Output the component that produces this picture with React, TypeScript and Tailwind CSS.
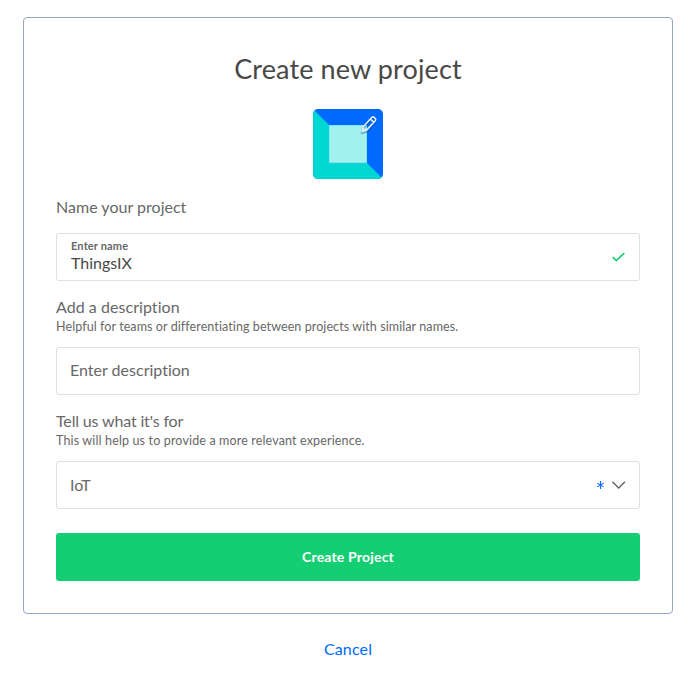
function ProjectIcon() {
  return (
    <svg width="70" height="70" viewBox="0 0 70 70" className="mt-[21px] rounded-[5px]" aria-hidden="true">
      <rect width="70" height="70" fill="#0069ff" />
      <path d="M0 0 L16 16 V54 H54 L70 70 H0 Z" fill="#00d7d2" />
      <rect x="16" y="16" width="38" height="38" fill="#a1f2ee" />
      <path d="M16.5 53.5V16.5H53.5V53.5Z" fill="none" stroke="#86e8ea" />
      <g fill="none" strokeLinejoin="round" strokeLinecap="round" transform="translate(0 0.6)">
        <path d="M49 22.3 L50.3 17.5 L58.9 8.1 Q59.9 7.2 61 8.2 L62.3 9.4 Q63.3 10.4 62.3 11.5 L53.6 20.9 Z" stroke="#003a8c" strokeOpacity="0.35" strokeWidth="2.8" transform="translate(0 1)" />
        <path d="M49 21.9 L50.3 17.1 L58.9 7.7 Q59.9 6.8 61 7.8 L62.3 9 Q63.3 10 62.3 11.1 L53.6 20.5 Z M57.4 9.5 L60.8 12.6" stroke="#dbe9fb" strokeWidth="1.7" />
        <path d="M49 21.9 L50.1 17.9 L52.9 20.7 Z" fill="#dbe9fb" />
      </g>
    </svg>
  );
}

export default function App() {
  return (
    <main className="flex h-[689px] w-[690px] flex-col bg-white pl-[23px] pt-[17px] font-['Lato',sans-serif] text-[#676767]">
      <section className="flex h-[597px] w-[650px] flex-col items-center rounded-[4px] border border-[#99a6c2] px-8 pt-8">
        <h1 className="h-[38px] whitespace-nowrap text-[27px] leading-[38px] tracking-[0.12px] text-[#484848]">
          Create new project
        </h1>
        <ProjectIcon />
        <div className="mt-[18px] flex w-full flex-col">
          <h2 className="h-5 text-base leading-5 tracking-[0.02px]">Name your project</h2>
          <div className="mt-4 flex h-12 items-center justify-between rounded-[3px] border border-[#dfdfdf] px-[14px]">
            <div className="flex flex-col pb-[2px]">
              <span className="text-[11px] font-bold leading-[14px] tracking-[0.15px]">Enter name</span>
              <span className="text-base leading-5 text-[#484848]">ThingsIX</span>
            </div>
            <svg width="13" height="10" viewBox="0 0 13 10" fill="none" stroke="#15cd72" strokeWidth="1.6">
              <path d="M0.7 5.2 L4.3 8.6 L12.3 1" />
            </svg>
          </div>
          <div className="mt-4 flex flex-col">
            <h2 className="h-5 text-base leading-5 tracking-[0.05px]">Add a description</h2>
            <p className="mt-px h-[18px] text-[12.5px] leading-[18px] tracking-[0.09px]">
              Helpful for teams or differentiating between projects with similar names.
            </p>
          </div>
          <div className="mt-[11px] flex h-12 items-center rounded-[3px] border border-[#dfdfdf] px-[13px] pb-[2px] text-base tracking-[0.01px]">
            Enter description
          </div>
          <div className="mt-4 flex flex-col">
            <h2 className="h-5 text-base leading-5 tracking-[-0.15px]">Tell us what it's for</h2>
            <p className="mt-px h-[18px] text-[12.5px] leading-[18px] tracking-[0.15px]">
              This will help us to provide a more relevant experience.
            </p>
          </div>
          <div className="mt-[11px] flex h-12 items-center rounded-[3px] border border-[#dfdfdf] px-[13px] text-base">
            <span>IoT</span>
            <svg className="ml-auto" width="8" height="8" viewBox="0 0 8 8" stroke="#0069ff" strokeWidth="1.1">
              <path d="M3.5 0V8M0.3 2.1L6.7 5.9M6.7 2.1L0.3 5.9" />
            </svg>
            <svg className="ml-[7px]" width="14" height="8" viewBox="0 0 14 8" fill="none" stroke="#676767" strokeWidth="1.5">
              <path d="M0.5 0.8L6.7 7L12.9 0.8" />
            </svg>
          </div>
          <button
            type="button"
            className="mt-6 h-12 rounded-[3px] bg-[#15cd72] text-sm font-bold tracking-[0.18px] text-white"
          >
            Create Project
          </button>
        </div>
      </section>
      <a className="mt-[25px] w-[650px] text-center text-base leading-5 tracking-[0.15px] text-[#0069ff]">Cancel</a>
    </main>
  );
}
